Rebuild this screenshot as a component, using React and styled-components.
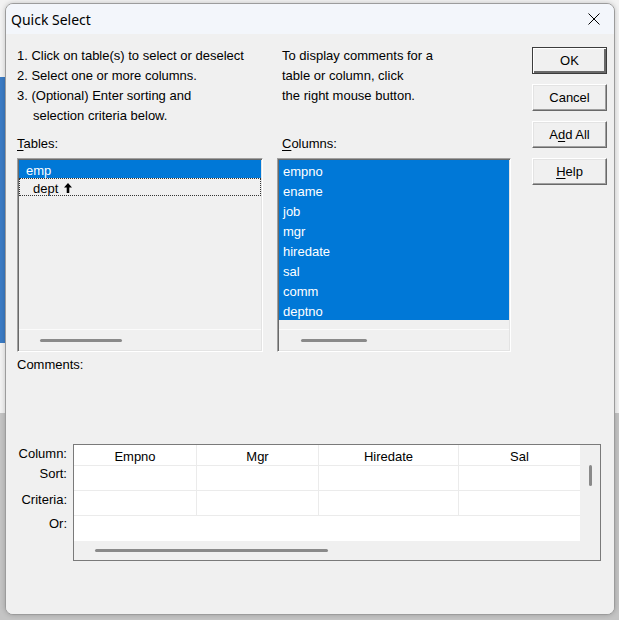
import React from "react";
import styled, { createGlobalStyle } from "styled-components";

const GlobalStyle = createGlobalStyle`
  html, body {
    margin: 0;
    padding: 0;
  }
  body {
    width: 619px;
    height: 620px;
    overflow: hidden;
    font-family: "Liberation Sans", Arial, sans-serif;
    background:
      linear-gradient(to bottom, transparent 77px, #3b7bc4 77px, #3b7bc4 343px, transparent 343px) 0 0 / 5px 100% no-repeat,
      linear-gradient(to bottom, #f2f2f2 413px, #c4c4c4 413px);
  }
`;

const Window = styled.div`
  margin: 3px 0 0 5px;
  width: 610px;
  height: 612px;
  box-sizing: border-box;
  border: 1px solid #9c9c9c;
  border-radius: 8px;
  background: #f0f0f0;
  overflow: hidden;
  display: flex;
  flex-direction: column;
  box-shadow: 0 0 5px rgba(0, 0, 0, 0.2);
`;

const TitleBar = styled.div`
  flex: none;
  height: 30px;
  display: flex;
  align-items: center;
  justify-content: space-between;
  padding-left: 5px;
  background: #f3f6fb;
  font-family: "Noto Sans", "Open Sans", sans-serif;
  font-size: 14px;
  color: #000;
`;

const CloseBox = styled.div`
  width: 40px;
  height: 30px;
  display: flex;
  align-items: center;
  justify-content: center;
`;

const Body = styled.div`
  flex: 1;
  padding: 11px 7px 0 11px;
  background: #f0f0f0;
  font-size: 13px;
  color: #000;
`;

const TopGrid = styled.div`
  display: grid;
  grid-template-columns: 246px 234px 1fr;
  grid-template-rows: 80px auto auto;
  column-gap: 14px;
`;

const Instructions = styled.div`
  padding: 1px 0 0 ${(p) => p.$pad || 0}px;
  line-height: 20px;
  white-space: nowrap;
`;

const Indent = styled.div`
  padding-left: ${(p) => p.$pad || 0}px;
`;

const FieldLabel = styled.div`
  margin-top: ${(p) => p.$mt ?? 11}px;
  padding-left: ${(p) => p.$pad || 0}px;
  line-height: 16px;
`;

const Key = styled.span`
  text-decoration: underline;
  text-underline-offset: 2px;
`;

const ListBox = styled.div`
  margin-top: 6px;
  height: 194px;
  box-sizing: border-box;
  border: 1px solid;
  border-color: #a0a0a0 #ffffff #ffffff #a0a0a0;
  box-shadow: inset 1px 1px 0 #696969, inset -1px -1px 0 #e3e3e3;
  padding: 1px;
  display: flex;
  flex-direction: column;
  background: #f0f0f0;
`;

const ListItems = styled.div`
  flex: 1;
  display: flex;
  flex-direction: column;
  align-items: stretch;
`;

const Item = styled.div`
  height: ${(p) => p.$h}px;
  box-sizing: border-box;
  padding: 2px 0 0 ${(p) => p.$indent}px;
  background: ${(p) => (p.$selected ? "#0078d7" : "transparent")};
  color: ${(p) => (p.$selected ? "#fff" : "#000")};
  outline: ${(p) => (p.$focus ? "1px dotted #333" : "none")};
  outline-offset: -1px;
  display: flex;
  align-items: center;
  gap: 6px;
`;

const HScroll = styled.div`
  flex: none;
  height: ${(p) => p.$h || 20}px;
  border-top: ${(p) => (p.$line ? "1px solid #fbfbfb" : "none")};
  box-sizing: border-box;
  padding: ${(p) => p.$top}px 0 0 ${(p) => p.$left}px;
  background: #f0f0f0;
`;

const Thumb = styled.div`
  height: 3px;
  border-radius: 2px;
  background: #8a8a8a;
`;

const ButtonCol = styled.div`
  grid-column: 3;
  grid-row: 1 / 4;
  justify-self: end;
  padding-top: 2px;
  display: flex;
  flex-direction: column;
  gap: 10px;
`;

const Button = styled.button`
  width: 75px;
  height: 27px;
  box-sizing: border-box;
  background: #f0f0f0;
  font-family: "Liberation Sans", Arial, sans-serif;
  font-size: 13px;
  color: #000;
  padding: 0;
  border: 1px solid;
  border-color: ${(p) => (p.$default ? "#3c3c3c" : "#fff #696969 #696969 #fff")};
  box-shadow: ${(p) =>
    p.$default
      ? "inset 1px 1px 0 #fff, inset -2px -2px 0 #696969"
      : "inset -1px -1px 0 #a0a0a0, inset 1px 1px 0 #e3e3e3"};
`;

const CriteriaArea = styled.div`
  margin-top: 71px;
  display: flex;
  gap: 6px;
`;

const RowLabels = styled.div`
  width: 50px;
  display: flex;
  flex-direction: column;
  align-items: flex-end;
`;

const RowLabel = styled.div`
  margin-top: ${(p) => p.$mt}px;
  line-height: 16px;
  white-space: nowrap;
`;

const GridBox = styled.div`
  width: 528px;
  height: 117px;
  box-sizing: border-box;
  border: 1px solid #7a7a7a;
  display: flex;
  flex-direction: column;
  background: #f0f0f0;
`;

const GridMain = styled.div`
  display: flex;
  height: 96px;
`;

const GridTable = styled.div`
  width: 506px;
  background: #fff;
  display: flex;
  flex-direction: column;
`;

const GridRow = styled.div`
  display: flex;
  height: ${(p) => p.$h}px;
  box-sizing: border-box;
  border-bottom: ${(p) => (p.$last ? "none" : "1px solid #ebebeb")};
`;

const Cell = styled.div`
  width: ${(p) => p.$w}px;
  box-sizing: border-box;
  border-right: ${(p) => (p.$end ? "none" : "1px solid #ebebeb")};
  display: flex;
  align-items: center;
  justify-content: center;
  padding-top: 2px;
`;

const VScroll = styled.div`
  flex: 1;
  padding: 20px 0 0 9px;
`;

const VThumb = styled.div`
  width: 3px;
  height: 21px;
  border-radius: 2px;
  background: #8a8a8a;
`;

const widths = [123, 122, 140, 121];
const headers = ["Empno", "Mgr", "Hiredate", "Sal"];
const columnNames = ["empno", "ename", "job", "mgr", "hiredate", "sal", "comm", "deptno"];

function UpArrow() {
  return (
    <svg width="8" height="10" viewBox="0 0 8 10">
      <path d="M4 0 L8 4.5 H5.3 V10 H2.7 V4.5 H0 Z" fill="#000" />
    </svg>
  );
}

function CloseIcon() {
  return (
    <svg width="12" height="12" viewBox="0 0 12 12">
      <path d="M0.5 0.5 L11.5 11.5 M11.5 0.5 L0.5 11.5" stroke="#000" strokeWidth="1" fill="none" />
    </svg>
  );
}

export default function App() {
  return (
    <>
      <GlobalStyle />
      <Window>
        <TitleBar>
          <span>Quick Select</span>
          <CloseBox>
            <CloseIcon />
          </CloseBox>
        </TitleBar>
        <Body>
          <TopGrid>
            <Instructions>
              <div>1. Click on table(s) to select or deselect</div>
              <div>2. Select one or more columns.</div>
              <div>3. (Optional) Enter sorting and</div>
              <Indent $pad={16}>selection criteria below.</Indent>
            </Instructions>
            <Instructions $pad={5}>
              <div>To display comments for a</div>
              <div>table or column, click</div>
              <div>the right mouse button.</div>
            </Instructions>
            <ButtonCol>
              <Button $default>OK</Button>
              <Button>Cancel</Button>
              <Button>
                A<Key>d</Key>d All
              </Button>
              <Button>
                <Key>H</Key>elp
              </Button>
            </ButtonCol>

            <FieldLabel>
              <Key>T</Key>ables:
            </FieldLabel>
            <FieldLabel $pad={5}>
              <Key>C</Key>olumns:
            </FieldLabel>

            <ListBox>
              <ListItems>
                <Item $h={18} $indent={7} $selected>
                  emp
                </Item>
                <Item $h={18} $indent={14} $focus>
                  dept <UpArrow />
                </Item>
              </ListItems>
              <HScroll $line $h={21} $top={9} $left={21}>
                <Thumb style={{ width: 82 }} />
              </HScroll>
            </ListBox>
            <ListBox>
              <ListItems>
                {columnNames.map((c) => (
                  <Item key={c} $h={20} $indent={4} $selected>
                    {c}
                  </Item>
                ))}
              </ListItems>
              <HScroll $line $h={21} $top={9} $left={22}>
                <Thumb style={{ width: 66 }} />
              </HScroll>
            </ListBox>
          </TopGrid>

          <FieldLabel $mt={5}>Comments:</FieldLabel>

          <CriteriaArea>
            <RowLabels>
              <RowLabel $mt={2}>Column:</RowLabel>
              <RowLabel $mt={4}>Sort:</RowLabel>
              <RowLabel $mt={10}>Criteria:</RowLabel>
              <RowLabel $mt={8}>Or:</RowLabel>
            </RowLabels>
            <GridBox>
              <GridMain>
                <GridTable>
                  <GridRow $h={21}>
                    {headers.map((h, i) => (
                      <Cell key={h} $w={widths[i]} $end={i === 3}>
                        {h}
                      </Cell>
                    ))}
                  </GridRow>
                  <GridRow $h={25}>
                    {widths.map((w, i) => (
                      <Cell key={i} $w={w} $end={i === 3} />
                    ))}
                  </GridRow>
                  <GridRow $h={25}>
                    {widths.map((w, i) => (
                      <Cell key={i} $w={w} $end={i === 3} />
                    ))}
                  </GridRow>
                  <GridRow $h={25} $last />
                </GridTable>
                <VScroll>
                  <VThumb />
                </VScroll>
              </GridMain>
              <HScroll $h={19} $top={8} $left={21}>
                <Thumb style={{ width: 233 }} />
              </HScroll>
            </GridBox>
          </CriteriaArea>
        </Body>
      </Window>
    </>
  );
}
